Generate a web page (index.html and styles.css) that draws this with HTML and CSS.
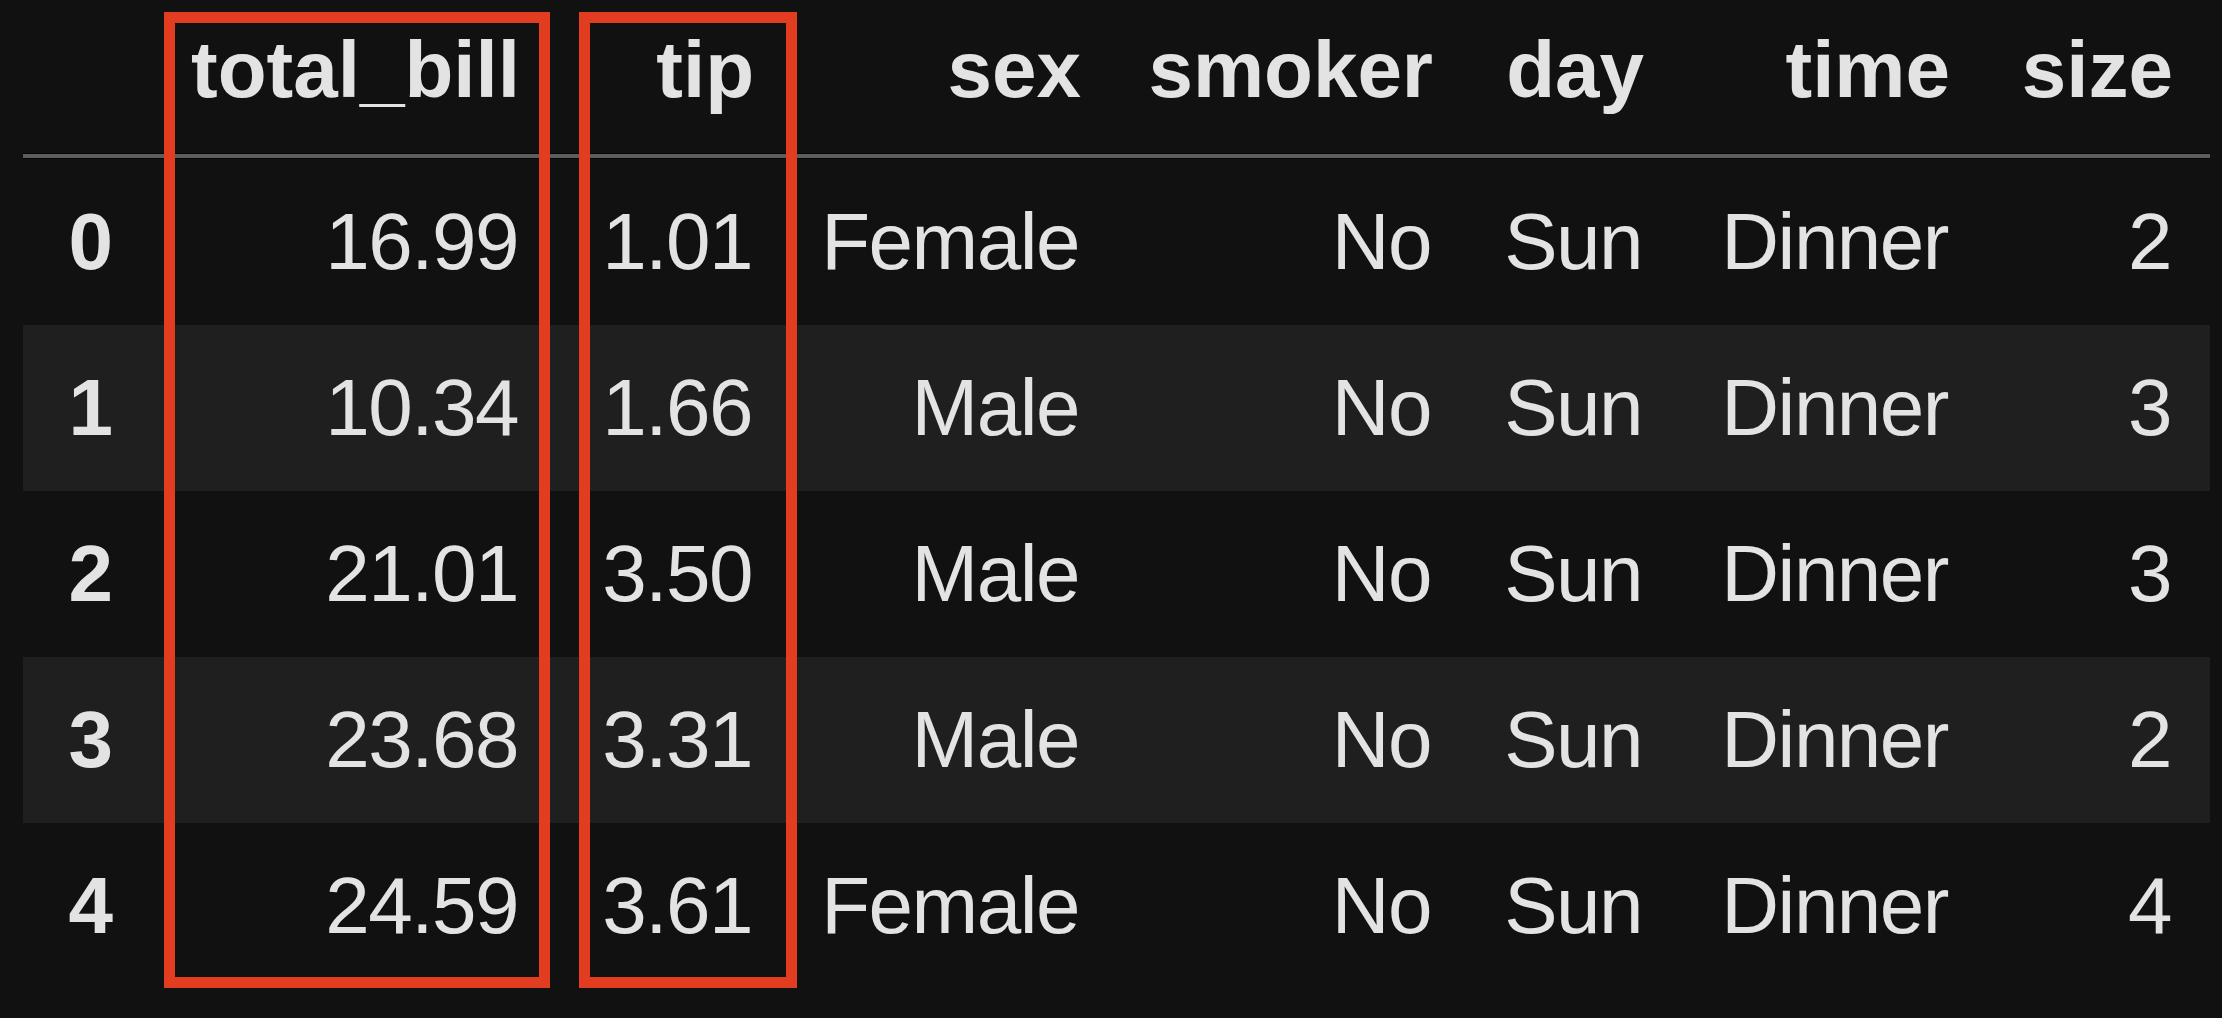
FILE: index.html
```html
<!DOCTYPE html>
<html lang="en">
<head>
<meta charset="utf-8">
<title>tips.head()</title>
<link rel="stylesheet" href="styles.css">
</head>
<body>
<div class="frame">
  <table class="df">
    <colgroup>
      <col class="c-idx">
      <col class="c-bill">
      <col class="c-tip">
      <col class="c-sex">
      <col class="c-smoker">
      <col class="c-day">
      <col class="c-time">
      <col class="c-size">
    </colgroup>
    <thead>
      <tr>
        <th></th>
        <th>total_bill</th>
        <th>tip</th>
        <th>sex</th>
        <th>smoker</th>
        <th>day</th>
        <th>time</th>
        <th>size</th>
      </tr>
    </thead>
    <tbody>
      <tr><th>0</th><td>16.99</td><td>1.01</td><td>Female</td><td>No</td><td>Sun</td><td>Dinner</td><td>2</td></tr>
      <tr><th>1</th><td>10.34</td><td>1.66</td><td>Male</td><td>No</td><td>Sun</td><td>Dinner</td><td>3</td></tr>
      <tr><th>2</th><td>21.01</td><td>3.50</td><td>Male</td><td>No</td><td>Sun</td><td>Dinner</td><td>3</td></tr>
      <tr><th>3</th><td>23.68</td><td>3.31</td><td>Male</td><td>No</td><td>Sun</td><td>Dinner</td><td>2</td></tr>
      <tr><th>4</th><td>24.59</td><td>3.61</td><td>Female</td><td>No</td><td>Sun</td><td>Dinner</td><td>4</td></tr>
    </tbody>
  </table>
  <div class="mark mark-bill"></div>
  <div class="mark mark-tip"></div>
</div>
</body>
</html>
```

FILE: styles.css
```css
html, body {
  margin: 0;
  padding: 0;
  background: #111111;
}

body {
  width: 2222px;
  height: 1018px;
  overflow: hidden;
  font-family: "Liberation Sans", Arial, Helvetica, sans-serif;
  color: #e3e3e3;
}

.frame {
  position: relative;
  padding-left: 23px;
}

.df {
  border-collapse: collapse;
  border-spacing: 0;
  table-layout: fixed;
  width: 2187px;
  font-size: 80px;
}

.c-idx { width: 127px; }
.c-bill { width: 407px; }
.c-tip { width: 234px; }
.c-sex { width: 327px; }
.c-smoker { width: 352px; }
.c-day { width: 211px; }
.c-time { width: 306px; }
.c-size { width: 223px; }

.df th,
.df td {
  text-align: right;
  white-space: nowrap;
  padding: 0 37px 0 0;
  line-height: 86px;
}

.df th {
  font-weight: bold;
}

.df td {
  letter-spacing: -1.5px;
  padding-right: 39px;
}

.df thead th {
  padding-top: 27px;
  padding-bottom: 46px;
  vertical-align: top;
  box-shadow: inset 0 -1px 0 #050505, inset 0 -5px 0 #5d5d5d, inset 0 -6px 0 #050505;
}

.df tbody th,
.df tbody td {
  padding-top: 40px;
  padding-bottom: 40px;
}

.df tbody tr:nth-child(even) {
  background: #1f1f1f;
}

.mark {
  position: absolute;
  top: 12px;
  height: 976px;
  box-sizing: border-box;
  border: 11px solid #e23c21;
}

.mark-bill {
  left: 164px;
  width: 386px;
}

.mark-tip {
  left: 579px;
  width: 218px;
}
```
